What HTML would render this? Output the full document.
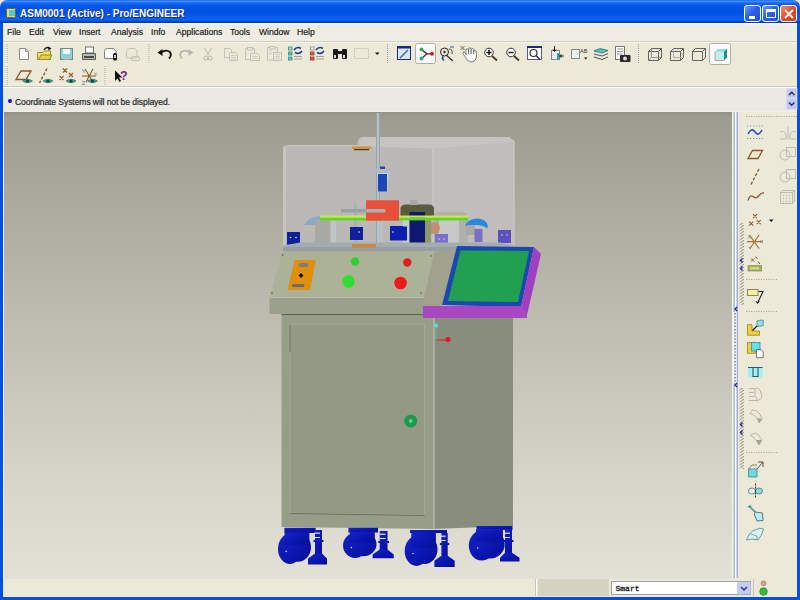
<!DOCTYPE html>
<html><head><meta charset="utf-8">
<style>
*{margin:0;padding:0;box-sizing:border-box}
html,body{width:800px;height:600px;overflow:hidden;background:#ECE9D8;font-family:"Liberation Sans",sans-serif;color:#000}
.a{position:absolute}
#title{left:0;top:0;width:800px;height:23px;background:linear-gradient(#1E6CF0 0px,#3C8CFF 1.5px,#1A66F0 3px,#0458E6 6px,#0050DE 12px,#0A5CEC 17px,#0C62F4 20px,#0048D0 21.5px,#0032A8 23px);border-radius:7px 7px 0 0}
#ttext{left:20px;top:7.5px;color:#fff;font-weight:bold;font-size:10px;line-height:12px;white-space:nowrap;text-shadow:1px 1px 0 #0A2A90}
.frame{background:#0050E0}
#menu{left:3px;top:23px;width:794px;height:19px;background:linear-gradient(#F8F7F2 0,#F8F7F2 1px,#EDECE3 2px,#EFEEE5 100%);border-bottom:1px solid #D4D0C0}
#menu span{position:absolute;top:4.3px;font-size:8.6px;line-height:10px;color:#101010;-webkit-text-stroke:0.2px #333}
#tb{left:3px;top:42px;width:794px;height:45px;background:#ECE9D8;border-top:1px solid #F6F4EC;border-bottom:1px solid #D0CCBC}
#msg{left:3px;top:87px;width:794px;height:25px;background:#EAE9E3;border-top:1px solid #FAFAF6;border-bottom:1px solid #F2F0E6}
#msgtxt{left:15px;top:97px;font-size:8.6px;line-height:10px;color:#181818;white-space:nowrap;letter-spacing:-0.1px;-webkit-text-stroke:0.2px #333}
#gfx{left:4px;top:112px;width:729px;height:467px;background:linear-gradient(#929084 0px,#9A988C 3px,#9E9C90 7px,#B0AEA2 25%,#C6C4B9 55%,#D8D6CB 80%,#E3E0D5 100%)}
#rtb{left:733px;top:112px;width:64px;height:466px;background:#ECE9D8}
#status{left:3px;top:579px;width:794px;height:18px;background:#ECE9D8}
.tbtn{top:5px;width:17px;height:17px;border:1px solid #fff;border-radius:3px;background:linear-gradient(135deg,#6E9BFA,#2B62E8 45%,#1E50D8)}
</style></head><body>
<div id="title" class="a"></div>
<div class="a" style="left:6px;top:8px;width:10px;height:10px;background:#E8DE6A;border:1px solid #6A6A30"><div class="a" style="left:2px;top:1px;width:6px;height:6px;background:#5CC0D8"></div></div>
<div id="ttext" class="a">ASM0001 (Active) - Pro/ENGINEER</div>
<div class="a tbtn" style="left:744px"><div class="a" style="left:4px;top:10px;width:6px;height:3px;background:#fff"></div></div>
<div class="a tbtn" style="left:762px"><div class="a" style="left:3px;top:3px;width:10px;height:9px;border:1px solid #fff;border-top:3px solid #fff"></div></div>
<div class="a tbtn" style="left:780px;background:linear-gradient(135deg,#F0906A,#E0502A 50%,#C83A1A)"><svg class="a" style="left:3px;top:3px" width="10" height="10"><path d="M1 1L9 9M9 1L1 9" stroke="#fff" stroke-width="1.8"/></svg></div>
<div class="a frame" style="left:0;top:23px;width:3px;height:577px"></div>
<div class="a frame" style="left:797px;top:23px;width:3px;height:577px"></div>
<div class="a frame" style="left:0;top:597px;width:800px;height:3px"></div>
<div class="a" style="left:3px;top:23px;width:1px;height:574px;background:#F8F8F4"></div><div class="a" style="left:3px;top:596px;width:794px;height:1px;background:#F8F8F4"></div>
<div id="menu" class="a">
<span style="left:4px">File</span><span style="left:26px">Edit</span><span style="left:50px">View</span><span style="left:76px">Insert</span><span style="left:108px">Analysis</span><span style="left:148px">Info</span><span style="left:173px">Applications</span><span style="left:227px">Tools</span><span style="left:256px">Window</span><span style="left:294px">Help</span>
</div>
<div id="tb" class="a"></div>
<div class="a" style="left:3px;top:81px;width:794px;height:1px;background:#EFE6D6"></div><div class="a" style="left:3px;top:83px;width:794px;height:2px;background:#F0ECE2"></div>
<div id="msg" class="a"></div>
<div class="a" style="left:8px;top:99px;width:4px;height:4px;border-radius:2px;background:#1010D0"></div>
<div id="msgtxt" class="a">Coordinate Systems will not be displayed.</div>
<div id="gfx" class="a"></div>
<div id="rtb" class="a"></div>
<div id="status" class="a"></div>
<svg class="a" style="left:0;top:0" width="800" height="600" viewBox="0 0 800 600"><!-- grips -->
<g stroke="#A8A89A" stroke-width="1" stroke-dasharray="1,1">
<line x1="7" y1="44" x2="7" y2="64"/><line x1="7" y1="66" x2="7" y2="85"/>
<line x1="149" y1="44" x2="149" y2="63"/><line x1="105" y1="66" x2="105" y2="85"/>
<line x1="387.5" y1="44" x2="387.5" y2="63" stroke="#9098B8"/><line x1="638.5" y1="44" x2="638.5" y2="63" stroke="#9098B8"/>
</g>
<!-- new -->
<path d="M19.5 48.5H25.5L28.5 51.5V59.5H19.5Z" fill="#fff" stroke="#8C8C84"/>
<path d="M25.5 48.5V51.5H28.5" fill="none" stroke="#8C8C84"/>
<!-- open -->
<path d="M37.5 52.5H43L44.5 51H50.5V59.5H37.5Z" fill="#F2E26A" stroke="#9A8A30"/>
<path d="M38.5 59.5L41 55H52L49.5 59.5Z" fill="#E6CF40" stroke="#9A8A30"/>
<path d="M44 50Q46 46.5 49.5 48" fill="none" stroke="#222" stroke-width="1.4"/><path d="M48 46.5L51.5 48.5L48.5 50.5Z" fill="#111"/>
<!-- save -->
<rect x="60.5" y="48.5" width="12" height="11" fill="#7FD8E0" stroke="#6A8A90"/>
<rect x="63" y="49" width="7" height="5" fill="#F4F8F8"/>
<rect x="63" y="56" width="7" height="3.5" fill="#A8C8CC"/>
<!-- print -->
<rect x="85.5" y="47" width="8" height="6" fill="#fff" stroke="#707070"/>
<path d="M82.5 53.5H95.5V59.5H82.5Z" fill="#B8B8B0" stroke="#5A5A58"/>
<rect x="84" y="56" width="10" height="2" fill="#4A4A48"/>
<!-- icon5 -->
<path d="M104.5 51.5Q104.5 48.5 107.5 48.5H113.5L116 51V58.5H104.5Z" fill="#fff" stroke="#808080"/>
<rect x="113" y="53" width="4" height="7.5" rx="1.5" fill="#1A1A1A"/><rect x="114" y="55" width="2" height="3" fill="#ccc"/>
<!-- icon6 disabled -->
<path d="M126.5 51.5Q126.5 48.5 129.5 48.5H135L137 51V58H126.5Z" fill="none" stroke="#C4C2B8"/>
<rect x="131.5" y="56.5" width="8" height="4" rx="1.5" fill="none" stroke="#C4C2B8"/>
<!-- undo -->
<path d="M161 52.5Q166 49 170 52Q172 55.5 169 58.5" fill="none" stroke="#111" stroke-width="1.8"/>
<path d="M157.5 52.5L162.5 49V56Z" fill="#111"/>
<!-- redo disabled -->
<path d="M190 52.5Q185 49 181 52Q179 55.5 182 58.5" fill="none" stroke="#B8B6AC" stroke-width="1.8"/>
<path d="M193.5 52.5L188.5 49V56Z" fill="#B8B6AC"/>
<!-- cut disabled -->
<g stroke="#BDBBB0" fill="none"><path d="M204.5 48L208.5 55M211.5 48L207.5 55"/><circle cx="206" cy="58" r="2"/><circle cx="210" cy="58" r="2"/></g>
<!-- copy disabled -->
<g stroke="#C4C2B8" fill="#ECE9D8" stroke-width="1">
<path d="M224.5 48.5H230L231.5 50V57.5H224.5Z"/><path d="M229.5 52.5H235.5L237.5 54.5V60.5H229.5Z"/>
<path d="M231 55.5H236M231 57.5H236M231 59H236" stroke-width=".7"/>
<!-- paste -->
<path d="M245.5 48.5H254.5V59.5H245.5Z"/><rect x="247.5" y="47.5" width="5" height="2.5"/><path d="M250.5 53.5H257.5L259.5 55.5V60.5H250.5Z"/>
<path d="M252 56.5H258M252 58.5H258" stroke-width=".7"/>
<!-- paste special -->
<path d="M267.5 47.5H277.5V60H267.5Z"/><rect x="270" y="46.5" width="5" height="2.5"/><path d="M273.5 52.5H281.5V60.5H273.5Z"/>
<path d="M275 54.5H280M275 56.5H280M275 58.5H280M269 51H272M269 53.5H272" stroke-width=".7"/>
</g>
<!-- regen -->
<g><rect x="288.5" y="47" width="3.5" height="3" fill="#A8E0E0" stroke="#3A8A8A" stroke-width=".8"/><rect x="288.5" y="52" width="3.5" height="3" fill="#5AC8C0" stroke="#3A8A8A" stroke-width=".8"/><rect x="288.5" y="57" width="3.5" height="3" fill="#5AC8C0" stroke="#3A8A8A" stroke-width=".8"/>
<path d="M294 50Q297 46 301 48.5M302 51Q299 55 295 52.5" fill="none" stroke="#1A3CA0" stroke-width="1.6"/>
<rect x="294" y="56" width="8" height="1" fill="#A0A098"/><rect x="294" y="58.5" width="8" height="1" fill="#A0A098"/>
<rect x="310.5" y="47" width="3.5" height="3" fill="#fff" stroke="#888" stroke-width=".8"/><rect x="310.5" y="52" width="3.5" height="3" fill="#E06060" stroke="#A03030" stroke-width=".8"/><rect x="310.5" y="57" width="3.5" height="3" fill="#E06060" stroke="#A03030" stroke-width=".8"/>
<path d="M316 50Q319 46 323 48.5M324 51Q321 55 317 52.5" fill="none" stroke="#1A3CA0" stroke-width="1.6"/>
<rect x="316" y="56" width="8" height="1" fill="#A0A098"/><rect x="316" y="58.5" width="8" height="1" fill="#A0A098"/></g>
<!-- binoculars -->
<g fill="#1A1A1A"><rect x="333" y="49" width="5" height="10" rx="1"/><rect x="342" y="49" width="5" height="10" rx="1"/><rect x="337" y="51" width="6" height="3"/><rect x="334" y="55" width="2" height="3" fill="#D8D8D8"/><rect x="343" y="55" width="2" height="3" fill="#D8D8D8"/></g>
<!-- select box disabled -->
<rect x="354.5" y="48.5" width="14" height="10" fill="none" stroke="#C4C2B8" stroke-dasharray="2,1"/>
<path d="M375 52.5H379.5L377.2 55Z" fill="#111"/>
<!-- repaint -->
<rect x="397.5" y="46.5" width="13" height="13" fill="#D8E8F8" stroke="#1A2A80"/><rect x="397" y="46" width="14" height="2.5" fill="#1A2A80"/>
<path d="M400 58L408 50" stroke="#4A6AC0" stroke-width="1.6"/>
<!-- spin button -->
<rect x="415.5" y="43.5" width="20" height="20" rx="2" fill="#FAFAFA" stroke="#B0AEA4"/>
<path d="M421.5 49.5L427 53.8L432 53.8M427 53.8L421.5 58.5" fill="none" stroke="#6A1A1A" stroke-width="1.2"/>
<circle cx="421.5" cy="49.6" r="2" fill="#2FAF4F"/><circle cx="421.5" cy="58.6" r="2" fill="#2FA88F"/><circle cx="432" cy="53.8" r="2" fill="#C02020"/>
<!-- orient -->
<circle cx="444.5" cy="52" r="4" fill="none" stroke="#222"/><circle cx="444.5" cy="52" r="1.2" fill="#222"/>
<path d="M446 55L453 61" stroke="#333" stroke-width="1.3"/><path d="M449 49Q453 49 452 54" stroke="#444" fill="none"/>
<path d="M444 60.5Q441 58 443.5 56.5" stroke="#1A3A90" stroke-width="1.5" fill="none"/><rect x="450" y="46" width="4" height="2" fill="#90A0C0"/>
<!-- hand -->
<g fill="#fff" stroke="#444" stroke-width=".7">
<rect x="466" y="49" width="2.6" height="7" rx="1.3"/>
<rect x="468.6" y="47.8" width="2.6" height="8" rx="1.3"/>
<rect x="471.2" y="48.6" width="2.6" height="7" rx="1.3"/>
<rect x="473.8" y="50.5" width="2.5" height="6" rx="1.25"/>
</g>
<path d="M466.3 54H476V57Q475.8 61.5 471 62Q467 61.5 465 56.5L463 53.5Q462.5 52 464.3 52.3L466.3 54.5Z" fill="#fff"/>
<path d="M476.3 55V57Q476 61.5 471 62Q467 61.5 465 56.5L463 53.5Q462.5 52 464.3 52.3L466.5 55" fill="none" stroke="#444" stroke-width=".7"/>
<path d="M460.5 46L464.5 50M464.5 46L460.5 50" stroke="#6A4A2A" stroke-width=".9"/>
<!-- zoom in -->
<circle cx="489" cy="52.5" r="4.3" fill="#fff" stroke="#333" stroke-width="1"/><path d="M486.5 52.5H491.5M489 50V55" stroke="#111" stroke-width="1.5"/>
<path d="M492 56L497 60.5" stroke="#4A3A2A" stroke-width="1.8"/>
<!-- zoom out -->
<circle cx="511" cy="52.5" r="4.3" fill="#fff" stroke="#333" stroke-width="1"/><path d="M508.5 52.5H513.5" stroke="#111" stroke-width="1.5"/>
<path d="M514 56L519 60.5" stroke="#4A3A2A" stroke-width="1.8"/>
<!-- refit -->
<rect x="527.5" y="46.5" width="14" height="13" fill="#fff" stroke="#5A5A90"/><rect x="527" y="46" width="15" height="2" fill="#1A2A80"/>
<circle cx="533.5" cy="53" r="3.5" fill="none" stroke="#333" stroke-width="1.2"/><path d="M536 55.5L540 59.5" stroke="#333" stroke-width="1.5"/>
<!-- reorient -->
<rect x="551.5" y="50.5" width="8" height="9" fill="#E8F4F8" stroke="#888"/><rect x="557" y="53" width="3" height="6" fill="#30A0A0"/>
<path d="M554.5 46V51M553 49.5L554.5 51.5L556 49.5" stroke="#111" fill="none"/><path d="M564 56H560M561.5 54.5L559.5 56L561.5 57.5" stroke="#111" fill="none"/>
<!-- saved views -->
<rect x="571.5" y="49.5" width="8" height="9" fill="#E8F4F4" stroke="#888"/>
<text x="580" y="53" font-size="5.5" font-family="Liberation Sans" fill="#333">AB</text>
<path d="M584 57.5H587.5L585.7 59.5Z" fill="#111"/>
<!-- layers -->
<path d="M594 51L600 48.5L608 50.5L602 53Z" fill="#50C8C8" stroke="#2A6A6A" stroke-width=".8"/>
<path d="M594 54L602 56L608 53.5M594 57L602 59.5L608 57" fill="none" stroke="#444" stroke-width=".9"/>
<!-- camera/model -->
<rect x="615.5" y="46.5" width="9" height="13" fill="#fff" stroke="#777"/>
<path d="M617 49H623M617 51.5H623M617 54H623" stroke="#999"/>
<rect x="620" y="55" width="10.5" height="7" rx="1" fill="#2A2A2A"/><circle cx="625" cy="58.5" r="2" fill="#D8D8D8"/>
<!-- wireframe etc -->
<g fill="none" stroke="#555" stroke-width=".9">
<path d="M648.5 51.5L651.5 48.5H661.5V57.5L658.5 60.5H648.5Z M648.5 51.5H658.5V60.5 M658.5 51.5L661.5 48.5"/>
<path d="M651.5 48.5V57.5H661.5M651.5 57.5L648.5 60.5" stroke="#888"/>
<path d="M670.5 51.5L673.5 48.5H683.5V57.5L680.5 60.5H670.5Z M670.5 51.5H680.5V60.5 M680.5 51.5L683.5 48.5"/>
<path d="M673.5 48.5V57.5H683.5" stroke="#AAA"/>
<path d="M692.5 51.5L695.5 48.5H705.5V57.5L702.5 60.5H692.5Z M692.5 51.5H702.5V60.5 M702.5 51.5L705.5 48.5"/>
</g>
<!-- shade button -->
<rect x="709.5" y="43.5" width="21" height="21" rx="2" fill="#FAFAFA" stroke="#B0AEA4"/>
<path d="M715 51.5L718 49H727V57.5L724 60.5H715Z" fill="#BFF0F0"/>
<path d="M724 51.5L727 49V57.5L724 60.5Z" fill="#2A8A8A"/><path d="M715 51.5L718 49H727L724 51.5Z" fill="#80E0E0"/>
<path d="M715 51.5V60.5H724" fill="none" stroke="#D08080" stroke-width=".8"/>
<!-- row 2 -->
<g stroke="#8A5A2A" stroke-width="1.4" fill="none">
<path d="M16 79.5L21 71H31L26 79.5Z"/>
<path d="M47 68.5L39.5 83" stroke-dasharray="3,1.6"/>
<path d="M63 68.5L67 72.5M67 68.5L63 72.5M59.5 76L63.5 80M63.5 76L59.5 80M69 73L73 77M73 73L69 77" stroke-width="1.1"/>
<path d="M82 76H96M85 69L93 82M93 69L86 82" stroke-width="1.1"/>
</g>
<path d="M22.5 81Q27.5 77.5 32.5 81Q27.5 84.5 22.5 81Z" fill="#3AA090" stroke="#1A6A5A" stroke-width=".6"/><circle cx="27.5" cy="81" r="1.6" fill="#0A4A3A"/><path d="M43 81Q48 77.5 53 81Q48 84.5 43 81Z" fill="#3AA090" stroke="#1A6A5A" stroke-width=".6"/><circle cx="48" cy="81" r="1.6" fill="#0A4A3A"/><path d="M66 81Q71 77.5 76 81Q71 84.5 66 81Z" fill="#3AA090" stroke="#1A6A5A" stroke-width=".6"/><circle cx="71" cy="81" r="1.6" fill="#0A4A3A"/><path d="M87.5 81Q92.5 77.5 97.5 81Q92.5 84.5 87.5 81Z" fill="#3AA090" stroke="#1A6A5A" stroke-width=".6"/><circle cx="92.5" cy="81" r="1.6" fill="#0A4A3A"/><g stroke="#6A9A9A" stroke-width=".8" fill="none"><path d="M82 69L84 71.5L86 69M84 71.5V73"/><path d="M94 72.5L97 75.5M97 72.5L94 75.5"/><path d="M82 81.5H85L82 84.5H85"/></g><path d="M115 70.5V81L117.5 78.5L119.5 82L121 81L119 77.5H122.5Z" fill="#111"/>
<text x="120" y="80" font-size="12.5" font-weight="bold" font-family="Liberation Sans" fill="#7A207A">?</text>
<!-- cover box -->
<path d="M283 148Q283 145 287 145H357Q358 137 363 137H509L514 141V246H283Z" fill="#BBB8B5"/>
<path d="M359 146Q358 137 363 137H509L514 141L433 148Z" fill="#C6C3C0"/>
<path d="M433 148L514 141V246H433Z" fill="#C1BDBC"/>
<path d="M287 145.5H357L433 148L514 141" fill="none" stroke="#CAC7C3" stroke-width="1"/>
<path d="M433 148V246" stroke="#CFCCC8" stroke-width="1.2"/>
<rect x="283" y="147" width="3" height="99" fill="#C8C5C1"/>
<path d="M514 141V246" stroke="#C8C5C1" stroke-width="1.5"/>
<!-- orange small top part -->
<rect x="352" y="146.5" width="19" height="2.5" fill="#D89038"/><rect x="354" y="149" width="15" height="1.2" fill="#4A3A20"/>
<!-- main rod -->
<rect x="376" y="113" width="4" height="132" fill="#9CA4AC"/>
<rect x="377.3" y="113" width="1.3" height="132" fill="#C4CCD4"/>
<!-- rod bracket -->
<path d="M370 168H390Q392 170.5 390 173H370Q368 170.5 370 168Z" fill="#B4B8C8"/>
<rect x="380" y="166.5" width="5" height="2.5" fill="#2A4AA0"/>
<path d="M377 173H389L387.5 185V191.5H378V185Z" fill="#C8D0E0"/>
<rect x="378" y="174" width="9" height="17.5" fill="#1A48B8"/>
<!-- left curved blue -->
<path d="M304 225Q308 217 320 216V225Z" fill="#8AA8C8"/>
<!-- gray block -->
<rect x="315" y="220" width="15" height="24" fill="#A8A8A4"/>
<rect x="331" y="220" width="5" height="24" fill="#C0C4C4"/>
<!-- second rod and crossbar -->
<rect x="354" y="203" width="3" height="41" fill="#A8B0B8"/>
<rect x="341" y="209" width="43" height="3.5" fill="#98A0A8"/>
<!-- dark blue blocks -->
<rect x="287" y="232" width="13" height="14" fill="#10209A"/>
<rect x="299" y="243" width="11" height="3" fill="#10209A"/>
<rect x="350" y="227" width="13" height="13" fill="#10209A"/>
<rect x="390" y="226" width="17" height="14" fill="#10209A"/>
<rect x="378" y="220" width="5" height="24" fill="#B8C0C4"/>
<!-- red block -->
<!--RB-->
<rect x="366" y="200.5" width="33" height="20" fill="#E8503A"/>
<rect x="378" y="209" width="15" height="3.5" fill="#A8B0B0"/>
<!-- olive motor -->
<path d="M400.5 217V208Q401 204.5 406 204.5H429Q434 204.5 434 209V216Z" fill="#5A5C40"/>
<rect x="410" y="200" width="7.5" height="5" fill="#A8A8A0"/>
<rect x="409.5" y="212" width="15.5" height="33" fill="#0E1870"/>
<rect x="403" y="217" width="6" height="28" fill="#C8CCD0"/>
<!-- right mech -->
<path d="M434 245V216Q434 212 440 212H462Q468 213 468 220V245Z" fill="#B0B0AC"/>
<rect x="439" y="220" width="20" height="25" fill="#C8C8C4"/>
<ellipse cx="434" cy="228" rx="6" ry="6" fill="#C08860" opacity=".85"/>
<rect x="425" y="218" width="6" height="27" fill="#8A9A70"/>
<rect x="466" y="224" width="9" height="11" fill="#A8A8A8"/><path d="M465 226Q467 219 477 218.5Q486 218.5 488 226L487 228.5Q483 225 477 225H468Z" fill="#2A88E0"/>
<rect x="474.5" y="229" width="8" height="13" fill="#7A70C0"/>
<rect x="498" y="230" width="13" height="13" fill="#5A50C0"/>
<rect x="435" y="234" width="13" height="14" fill="#7A70C8"/>
<rect x="390" y="226.5" width="17" height="14" fill="#0A20B0"/><g fill="#E8E8F8"><circle cx="290.5" cy="237.5" r=".8"/><circle cx="296" cy="237.5" r=".8"/><circle cx="359" cy="232" r=".8"/><circle cx="393" cy="232" r=".8"/><circle cx="502" cy="235" r=".7"/><circle cx="507" cy="235" r=".7"/><circle cx="439" cy="239" r=".7"/><circle cx="444" cy="239" r=".7"/></g>
<rect x="320" y="215.5" width="148" height="2.3" fill="#D0E448"/>
<rect x="320" y="217.8" width="148" height="2.6" fill="#58D828"/>
<rect x="366" y="200.5" width="33" height="20" fill="#E8503A"/><rect x="366" y="209" width="18" height="3.5" fill="#A8B0B8"/><circle cx="384" cy="210.7" r="1.8" fill="#A8B0B8"/>
<!-- base plate -->
<path d="M283 245.5L300 242.5H500L514 245.5V251H283Z" fill="#A4ACB0"/><rect x="283" y="247" width="231" height="4" fill="#969EA2"/>
<rect x="352" y="244" width="24" height="3.5" fill="#C88A3A"/>
<!-- control panel top -->
<path d="M282.5 251.5H434.5L424 297H269.5Z" fill="#ACB298"/>
<path d="M269.5 297H424V314H269.5Z" fill="#9BA08C"/><path d="M269.5 297.5H424" stroke="#B8BCA8" stroke-width="1"/>
<path d="M434.5 251.5L457 250L442 305L424 314V297Z" fill="#A0A28E"/>
<g fill="#6A6E60"><circle cx="282.5" cy="255" r=".9"/><circle cx="272" cy="293" r=".9"/><circle cx="431" cy="256" r=".9"/><circle cx="421" cy="293" r=".9"/></g>
<!-- orange card -->
<path d="M294.5 260H316L310 290H287.5Z" fill="#E0900C"/>
<ellipse cx="303.5" cy="265" rx="5" ry="2.2" fill="#7A8080"/>
<path d="M292.5 284H304.5L304 287H292Z" fill="#6A6A70"/>
<path d="M301 273L303.5 275.5L301 278L298.5 275.5Z" fill="#111"/>
<!-- buttons -->
<circle cx="355" cy="261.5" r="4.2" fill="#30D030"/>
<circle cx="348.5" cy="281.5" r="6.3" fill="#30E030"/>
<circle cx="407.3" cy="262.5" r="4.2" fill="#E02020"/>
<circle cx="400.6" cy="283" r="6.3" fill="#F01818"/>
<!-- cabinet -->
<path d="M281.5 314H434V529L281.5 527Z" fill="#969E8A"/>
<path d="M434 314H513V526L434 529Z" fill="#898D7B"/>
<path d="M290 324H424.5V515L290 513Z" fill="#929A85" stroke="#A2A894" stroke-width="1"/><path d="M290 513.5L424.5 515.5" stroke="#6A7060" stroke-width="1"/><path d="M281.5 314.5H434" stroke="#5A6048" stroke-width="1.2"/>
<path d="M290 325V352" stroke="#6A6E5A" stroke-width="1"/>
<path d="M434 314V529" stroke="#C4C8B8" stroke-width="1"/>
<circle cx="410.7" cy="421" r="6.5" fill="#1A9A4A"/><circle cx="410.7" cy="421" r="2" fill="#70C890"/>
<!-- screen -->
<path d="M457 246L534 247L521 307L442 305Z" fill="#1848B0"/>
<path d="M460.5 250.5L529 251L518 302L448 301Z" fill="#20A050"/>
<path d="M534 247L541 254L527 315L521 307Z" fill="#A040C0"/>
<path d="M423 306H521L527 315L527 318H423Z" fill="#A848C0"/>
<!-- axis indicator -->
<path d="M436 325.5V340H448" fill="none" stroke="#E02020" stroke-width="1"/>
<path d="M436 325.5V340" stroke="#40E0E0" stroke-width="1"/>
<circle cx="436" cy="325.5" r="2" fill="#40E8E8"/><circle cx="448" cy="339.5" r="2.5" fill="#E81030"/>
<!-- wheels -->
<defs>
<linearGradient id="wg" x1="0" y1="0" x2="1" y2="1"><stop offset="0" stop-color="#1828C0"/><stop offset=".45" stop-color="#0A18B4"/><stop offset="1" stop-color="#080E98"/></linearGradient>
</defs>
<g fill="url(#wg)">
<rect x="284.4" y="527.8" width="31.200000000000045" height="5.2000000000000455"/><ellipse cx="289.9" cy="548.9" rx="11.9" ry="15.1"/><ellipse cx="297.8" cy="547.3" rx="13.2" ry="14.5"/><rect x="284.6" y="532.5" width="24.8" height="12.6"/><rect x="315" y="530" width="7" height="27.5"/><rect x="313.5" y="540" width="10" height="2"/><path d="M315 553.5H322L327 558.5V564.5H308V558.5Z"/>
<rect x="348.4" y="527.8" width="29.600000000000023" height="4.7000000000000455"/><ellipse cx="355.1" cy="545.5" rx="12.1" ry="12.5"/><ellipse cx="363.1" cy="544.2" rx="13.4" ry="12.0"/><rect x="349.7" y="532" width="25.1" height="10.4"/><rect x="379.7" y="531" width="7.800000000000011" height="22.600000000000023"/><rect x="378.2" y="541" width="10.800000000000011" height="2"/><path d="M379.7 549.6H387.5L393.75 554.6V558.3H372.7V554.6Z"/>
<rect x="410" y="530" width="37" height="3.0"/><ellipse cx="416.5" cy="551.0" rx="11.8" ry="15.0"/><ellipse cx="424.4" cy="549.5" rx="13.1" ry="14.4"/><rect x="411.3" y="532.5" width="24.6" height="14.8"/><rect x="441.4" y="533" width="6.300000000000011" height="26.799999999999955"/><rect x="439.9" y="543" width="9.300000000000011" height="2"/><path d="M441.4 555.8H447.7L454.7 560.8V566.9H434.4V560.8Z"/>
<rect x="476.5" y="526" width="36.0" height="3.8999999999999773"/><ellipse cx="481.7" cy="545.6" rx="12.9" ry="15.0"/><ellipse cx="490.3" cy="544.1" rx="14.4" ry="14.4"/><rect x="475.9" y="529.4" width="27.0" height="12.5"/><rect x="505" y="530" width="7" height="26.700000000000045"/><rect x="503.5" y="540" width="10" height="2"/><path d="M505 552.7H512L519.5 557.7V561.4H500V557.7Z"/>
</g>
<g fill="#E0E4F8"><rect x="314" y="532.6" width="6" height="1.2"/><rect x="315" y="537" width="5" height="1"/><rect x="378.7" y="533.6" width="6.800000000000011" height="1.2"/><rect x="379.7" y="538" width="5.800000000000011" height="1"/><rect x="440.4" y="535.6" width="5.300000000000011" height="1.2"/><rect x="441.4" y="540" width="4.300000000000011" height="1"/><rect x="504" y="532.6" width="6" height="1.2"/><rect x="505" y="537" width="5" height="1"/></g>
<g fill="#fff" opacity=".8"><circle cx="286.2" cy="551.4" r=".8"/><circle cx="351.4" cy="547.6" r=".8"/><circle cx="412.9" cy="553.5" r=".8"/><circle cx="477.7" cy="548.1" r=".8"/></g>
<!-- graphics/right toolbar divider lines -->
<rect x="732" y="112" width="1" height="466" fill="#F4F4F0"/>
<rect x="733.5" y="112" width="1.5" height="466" fill="#A8B8E0"/>
<rect x="735" y="112" width="1.5" height="466" fill="#FFFFFF"/>
<rect x="736.5" y="112" width="1.5" height="466" fill="#A0B0D8"/>
<!-- hatched grips -->
<defs><pattern id="hatch" width="4" height="3" patternUnits="userSpaceOnUse"><rect width="4" height="3" fill="#ECE9D8"/><path d="M0 3L4 0" stroke="#A8A698" stroke-width="1.2"/></pattern></defs>
<rect x="739.5" y="223" width="4.5" height="82" fill="url(#hatch)"/>
<rect x="732.5" y="312" width="4" height="71" fill="#F2F2F6"/><line x1="735" y1="313" x2="735" y2="383" stroke="#4A4A68" stroke-width="1.3" stroke-dasharray="1.2,2"/>
<rect x="739.5" y="388" width="4.5" height="81" fill="url(#hatch)"/>
<g fill="none" stroke="#1A2A9A" stroke-width="1.3">
<path d="M742.5 258.5L740.5 260.5L742.5 262.5"/><path d="M742.5 266.5L740.5 268.5L742.5 270.5"/>
<path d="M737 307L735 309L737 311"/><path d="M737 383L735 385L737 387"/>
<path d="M742.5 422.5L740.5 424.5L742.5 426.5"/><path d="M742.5 430.5L740.5 432.5L742.5 434.5"/>
</g>
<!-- top scroll buttons in message area -->
<rect x="786.5" y="88.5" width="10.5" height="9.5" fill="#C4C8F0" stroke="#D8DCF8" stroke-width=".8"/>
<rect x="786.5" y="98.8" width="10.5" height="10.5" fill="#C4C8F0" stroke="#D8DCF8" stroke-width=".8"/>
<path d="M789 95L791.7 92.3L794.4 95" stroke="#1A2A70" fill="none" stroke-width="1.4"/>
<path d="M789 102.5L791.7 105.2L794.4 102.5" stroke="#1A2A70" fill="none" stroke-width="1.4"/>
<!-- dotted separators -->
<g stroke="#A8A898" stroke-dasharray="1.2,1.3" stroke-width="1">
<line x1="746" y1="116.5" x2="797" y2="116.5"/>
<line x1="746" y1="279.5" x2="777" y2="279.5"/>
<line x1="746" y1="311.5" x2="777" y2="311.5"/>
<line x1="746" y1="452.5" x2="777" y2="452.5"/>
</g>
<!-- col1 icons -->
<g>
<line x1="747" y1="126" x2="763" y2="126" stroke="#6A9AD0" stroke-dasharray="1.2,1.8"/><line x1="747" y1="138.5" x2="763" y2="138.5" stroke="#5AB070" stroke-dasharray="1.2,1.8"/>
<path d="M748 134Q751.5 127 755 132Q758.5 137 762 130" fill="none" stroke="#2A4AD0" stroke-width="1.6"/>
<path d="M748 158.5L752.5 150.5H762.5L758 158.5Z" fill="#F6E8D4" stroke="#8A5A2A" stroke-width="1.3"/>
<path d="M759 169L751 184.5" stroke="#8A5A2A" stroke-width="1.4" stroke-dasharray="3,1.8"/>
<path d="M748 200.5Q750 194 753 196.5Q756 199.5 759 195.5Q761.5 192.5 764 193" fill="none" stroke="#8A5A2A" stroke-width="1.3"/>
<g stroke="#8A5A2A" stroke-width="1.1"><path d="M753 214.2L757 218.2M757 214.2L753 218.2M749.2 221.7L753.2 225.7M753.2 221.7L749.2 225.7M756.7 220.2L760.7 224.2M760.7 220.2L756.7 224.2"/></g>
<path d="M769 219.5H773.5L771.2 222Z" fill="#111"/>
<g stroke="#B0702A" stroke-width="1.2"><path d="M747 241.7H761M749.5 235L759 248.5M759 235L750 248.5"/></g>
<g stroke="#6A8A8A" stroke-width=".9"><path d="M748 235.5L751 238.5M751 235.5L748 238.5M760.5 240L763 243M763 240L760.5 243M748.5 247L751 249"/></g>
<g stroke="#8A5A2A" stroke-width="1"><path d="M751 258.5L754 261.5M754 258.5L751 261.5M755.5 256.5L757.5 259M758 261.5L760 264"/></g>
<rect x="748" y="265.7" width="13.7" height="5.3" fill="#A8B060" stroke="#7A8040" stroke-width=".6"/>
<rect x="750" y="267.3" width="9" height="2" fill="#D8E090"/>
<rect x="747.5" y="289.5" width="10.5" height="6" fill="#F8F0A0" stroke="#707040" stroke-width=".8"/>
<path d="M758.5 291.5H763L757.5 303" fill="none" stroke="#222" stroke-width="1.1"/>
<path d="M756 301L757.5 303.5L759.5 301.5" fill="none" stroke="#222"/>
<path d="M747.5 324.7H752V331H759.5V335.2H747.5Z" fill="#F0D040" stroke="#9A8020" stroke-width=".8"/>
<path d="M757 321L760 320.2H763.2V325.5L760 326.2H757Z" fill="#90E0E8" stroke="#3A8A90" stroke-width=".8"/>
<path d="M757 326L752.5 330.5" stroke="#111" stroke-width="1.1"/>
<rect x="747.5" y="342.7" width="8.5" height="10.5" fill="#F0D040" stroke="#9A8020" stroke-width=".8"/>
<rect x="751.5" y="342.5" width="8.5" height="8.5" fill="#60E0F0" stroke="#3A8A90" stroke-width=".8"/>
<path d="M756.5 349.5H761L763.2 352V357.7H756.5Z" fill="#fff" stroke="#555" stroke-width=".8"/>
<path d="M748 367H762.5V375Q762.5 377.5 760 377.5H750.5Q748 377.5 748 375Z" fill="#A0EEF6"/>
<path d="M748 367.5H762.5M753 368V376.5H758V368" fill="none" stroke="#2A5A60" stroke-width="1.1"/>
<g fill="none" stroke="#B8B6AC" stroke-width="1">
<path d="M749 388.5H754.5M749 392.5H754M749 396.5H754M748.5 400.5H758M755 389Q758 386.5 760 390L762 396Q761 400 758 400.5L755 396Z"/>
<path d="M752 410Q757 409.5 760 414L762 419L759 423L757 418Q755 415 750 413.5Z"/>
<path d="M753 434Q757 431.5 759 436L762 440L759 445L756 440Q754 437 750 435.5Z"/>
</g>
<path d="M757.5 418L762 419L759 423Z" fill="#A0A098"/><path d="M756 440L762 440L759 445Z" fill="#A0A098"/>
<path d="M748.5 469H757V477H748.5Z" fill="#70D8E0" stroke="#3A8A90" stroke-width=".8"/>
<path d="M757 469L763 462M758 462H763V467" fill="none" stroke="#444" stroke-width=".9"/>
<path d="M748.5 469L752 465H757" fill="none" stroke="#666" stroke-width=".8"/>
<ellipse cx="752" cy="491" rx="3.5" ry="3" fill="#E0F4F8" stroke="#4A7A80" stroke-width=".8"/>
<ellipse cx="759" cy="491" rx="3.5" ry="3" fill="#90D8E0" stroke="#4A7A80" stroke-width=".8"/>
<path d="M755.5 483.5V498.5" stroke="#333" stroke-dasharray="2,1"/>
<path d="M747 507.5L750.5 504.5L752 508Z" fill="#50D0D8"/><path d="M749 506L756.5 513.5" stroke="#3A6A70" stroke-width="1.6"/><path d="M755 512L762.5 513L763 520.5L757 521L754.5 515Z" fill="#B8ECF4" stroke="#3A5A60" stroke-width=".8"/><path d="M750 507L758 516" stroke="#D8F8F8" stroke-width=".6"/>
<path d="M746.5 540Q750 531 755 530Q760 527 763.5 529Q762 536 758 540Q752 538 746.5 540Z" fill="#D8F4F8" stroke="#4A8A90" stroke-width=".8"/>
<path d="M751 534L757 536L757 540" fill="none" stroke="#4A8A90" stroke-width=".7"/>
</g>
<!-- col2 disabled icons -->
<g fill="none" stroke="#BDBBB0" stroke-width="1">
<path d="M788 126V140M780 132Q786 130 786 136V139M796 132Q790 130 790 136V139M780 139H786M790 139H796"/>
<rect x="786.5" y="147.5" width="9" height="9"/><circle cx="785" cy="155" r="5"/>
<rect x="786.5" y="169.5" width="9" height="9"/><circle cx="785" cy="177" r="5"/>
<path d="M780.5 192.5L782.5 190.5H794.5V201.5L792.5 203.5H780.5Z M780.5 192.5H792.5V203.5M792.5 192.5L794.5 190.5"/><g fill="#BDBBB0" stroke="none"><circle cx="783.5" cy="195.5" r=".8"/><circle cx="786.5" cy="195.5" r=".8"/><circle cx="789.5" cy="195.5" r=".8"/><circle cx="783.5" cy="198.5" r=".8"/><circle cx="786.5" cy="198.5" r=".8"/><circle cx="789.5" cy="198.5" r=".8"/><circle cx="783.5" cy="201.5" r=".8"/><circle cx="786.5" cy="201.5" r=".8"/><circle cx="789.5" cy="201.5" r=".8"/></g>
</g>
<!-- status bar -->
<rect x="535" y="579" width="1" height="17" fill="#C8C4B4"/>
<rect x="536" y="579" width="1" height="17" fill="#FFFFFF"/>
<rect x="538" y="579" width="71" height="17" fill="#D6D2C2"/>
<rect x="611.5" y="581.5" width="139" height="13" fill="#fff" stroke="#A4A49C"/>
<text x="615.5" y="590.8" font-family="Liberation Mono" font-size="8" fill="#111" stroke="#111" stroke-width=".3">Smart</text>
<rect x="737.5" y="582.5" width="13" height="11.5" rx="1.5" fill="#C4CCF4" stroke="#B0C0E8" stroke-width=".6"/>
<path d="M741 587L744 590L747 587" fill="none" stroke="#2A3A90" stroke-width="1.5"/>
<rect x="753" y="579" width="1" height="17" fill="#C8C4B4"/>
<circle cx="763.5" cy="583.3" r="2.5" fill="#D8A090" stroke="#A07060" stroke-width=".6"/>
<circle cx="763.5" cy="591.5" r="3.8" fill="#30C030" stroke="#207020" stroke-width=".6"/>
</svg>
</body></html>
